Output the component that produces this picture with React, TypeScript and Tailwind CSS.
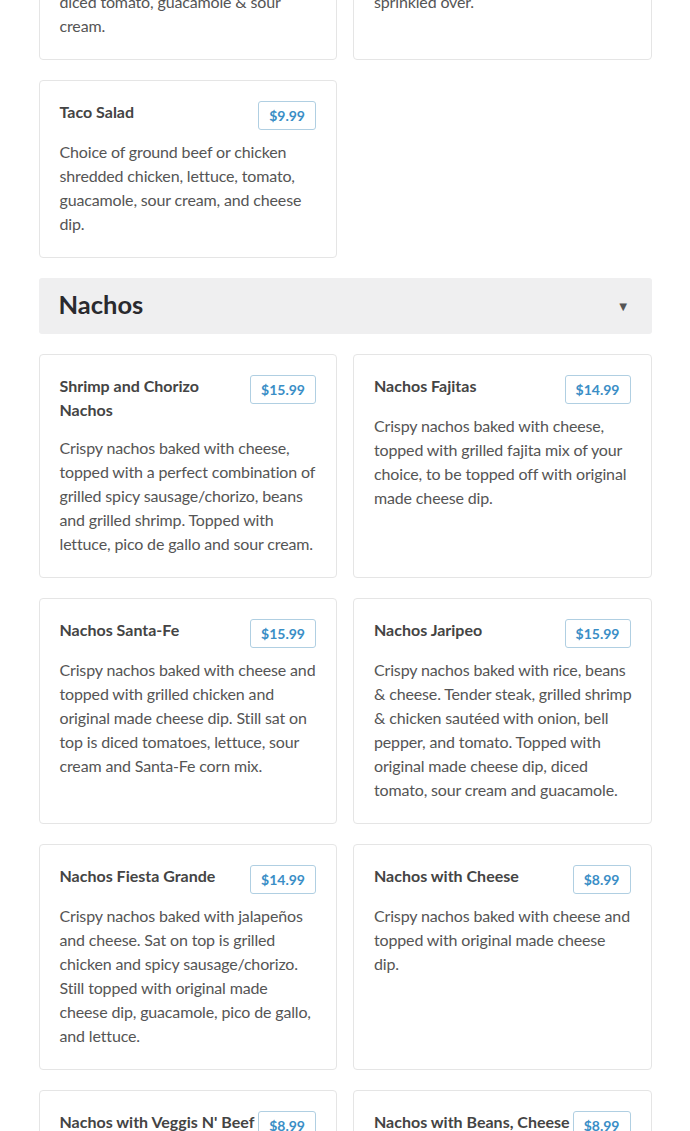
import type { ReactNode } from 'react';

type Item = {
  name: string;
  price: string;
  desc: ReactNode;
};

const topRow: Item[] = [
  {
    name: 'Burrito Supreme',
    price: '$11.99',
    desc: (
      <>
        Topped with cheese dip, lettuce,
        <br />
        diced tomato, guacamole &amp; sour
        <br />
        cream.
      </>
    ),
  },
  {
    name: 'Quesadilla Rellena',
    price: '$10.99',
    desc: (
      <>
        Topped with shredded cheese
        <br />
        sprinkled over.
      </>
    ),
  },
];

const salads: Item[] = [
  {
    name: 'Taco Salad',
    price: '$9.99',
    desc: 'Choice of ground beef or chicken shredded chicken, lettuce, tomato, guacamole, sour cream, and cheese dip.',
  },
];

const nachos: Item[] = [
  {
    name: 'Shrimp and Chorizo Nachos',
    price: '$15.99',
    desc: 'Crispy nachos baked with cheese, topped with a perfect combination of grilled spicy sausage/chorizo, beans and grilled shrimp. Topped with lettuce, pico de gallo and sour cream.',
  },
  {
    name: 'Nachos Fajitas',
    price: '$14.99',
    desc: 'Crispy nachos baked with cheese, topped with grilled fajita mix of your choice, to be topped off with original made cheese dip.',
  },
  {
    name: 'Nachos Santa-Fe',
    price: '$15.99',
    desc: 'Crispy nachos baked with cheese and topped with grilled chicken and original made cheese dip. Still sat on top is diced tomatoes, lettuce, sour cream and Santa-Fe corn mix.',
  },
  {
    name: 'Nachos Jaripeo',
    price: '$15.99',
    desc: 'Crispy nachos baked with rice, beans & cheese. Tender steak, grilled shrimp & chicken sautéed with onion, bell pepper, and tomato. Topped with original made cheese dip, diced tomato, sour cream and guacamole.',
  },
  {
    name: 'Nachos Fiesta Grande',
    price: '$14.99',
    desc: 'Crispy nachos baked with jalapeños and cheese. Sat on top is grilled chicken and spicy sausage/chorizo. Still topped with original made cheese dip, guacamole, pico de gallo, and lettuce.',
  },
  {
    name: 'Nachos with Cheese',
    price: '$8.99',
    desc: 'Crispy nachos baked with cheese and topped with original made cheese dip.',
  },
  {
    name: "Nachos with Veggis N' Beef",
    price: '$8.99',
    desc: 'Crispy nachos baked with cheese, topped with grilled veggies and ground beef, finished with original made cheese dip.',
  },
  {
    name: 'Nachos with Beans, Cheese & Beef',
    price: '$8.99',
    desc: 'Crispy nachos baked with beans and cheese, topped with ground beef and original made cheese dip.',
  },
];

function MenuCard({ item }: { item: Item }) {
  return (
    <div className="bg-white border border-[#e5e5e5] rounded-[4px] px-5 pt-[19px] pb-[21px]">
      <div className="flex items-start justify-between gap-[2px]">
        <h3 className="text-[16px] leading-6 font-bold text-[#444] mb-1">{item.name}</h3>
        <span className="shrink-0 mt-px border border-[#b0cfe2] rounded-[3px] px-[10px] h-[29px] flex items-center text-[14px] font-bold text-[#3a8ec6]">
          {item.price}
        </span>
      </div>
      <p className="mt-[10px] -mr-[2px] text-[16px] leading-6 tracking-[-0.15px] text-[#555]">{item.desc}</p>
    </div>
  );
}

function SectionHeader({ title }: { title: string }) {
  return (
    <div className="flex items-center justify-between bg-[#efeff0] rounded-[3px] h-[56px] px-5">
      <h2 className="-mt-[3px] text-[25.5px] font-bold text-[#2a2a2e]">{title}</h2>
      <span className="text-[13px] text-[#555] mr-[2px] mt-[2px]">▼</span>
    </div>
  );
}

export default function App() {
  return (
    <main
      className="min-h-screen bg-white"
      style={{ fontFamily: 'Lato, "Noto Sans", sans-serif' }}
    >
      <div className="w-[613px] mx-auto flex flex-col gap-5">
        <div className="h-[60px] overflow-hidden flex flex-col justify-end">
          <div className="grid grid-cols-2 gap-4">
            {topRow.map((item) => (
              <MenuCard key={item.name} item={item} />
            ))}
          </div>
        </div>
        <div className="grid grid-cols-2 gap-4">
          {salads.map((item) => (
            <MenuCard key={item.name} item={item} />
          ))}
        </div>
        <SectionHeader title="Nachos" />
        <div className="grid grid-cols-2 gap-x-4 gap-y-5">
          {nachos.map((item) => (
            <MenuCard key={item.name} item={item} />
          ))}
        </div>
      </div>
    </main>
  );
}
